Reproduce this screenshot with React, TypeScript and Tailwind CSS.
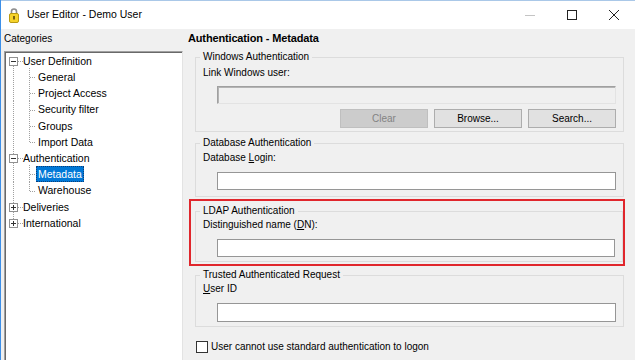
import React from 'react';

type Node = { label: string; open?: boolean; selected?: boolean; children?: string[] };

const tree: Node[] = [
  {
    label: 'User Definition',
    open: true,
    children: ['General', 'Project Access', 'Security filter', 'Groups', 'Import Data'],
  },
  { label: 'Authentication', open: true, children: ['Metadata', 'Warehouse'] },
  { label: 'Deliveries' },
  { label: 'International' },
];

const dot = { stroke: '#a0a0a0', strokeWidth: 1, strokeDasharray: '1 1' };

function RootRow({ node, first, last }: { node: Node; first: boolean; last: boolean }) {
  return (
    <div className="flex h-[16.2px] items-center">
      <svg width="18" height="16" className="shrink-0 overflow-visible">
        {!first && <line x1="8.5" y1="-1" x2="8.5" y2="4" style={dot} />}
        {!last && <line x1="8.5" y1="13" x2="8.5" y2="17" style={dot} />}
        <line x1="13" y1="8.5" x2="18" y2="8.5" style={dot} />
        <rect x="4.5" y="4.5" width="8" height="8" fill="#fff" stroke="#919191" />
        <line x1="6" y1="8.5" x2="11" y2="8.5" stroke="#333" />
        {!node.open && <line x1="8.5" y1="6" x2="8.5" y2="11" stroke="#333" />}
      </svg>
      <span className="text-[10.5px] leading-none">{node.label}</span>
    </div>
  );
}

function ChildRow({
  label,
  lastChild,
  rootContinues,
  selected,
}: {
  label: string;
  lastChild: boolean;
  rootContinues: boolean;
  selected: boolean;
}) {
  return (
    <div className="flex h-[16.2px] items-center">
      <svg width="31" height="16" className="shrink-0 overflow-visible">
        {rootContinues && <line x1="8.5" y1="-1" x2="8.5" y2="17" style={dot} />}
        <line x1="24.5" y1="-1" x2="24.5" y2={lastChild ? 8.5 : 17} style={dot} />
        <line x1="25" y1="8.5" x2="31" y2="8.5" style={dot} />
      </svg>
      <span
        className={
          selected
            ? 'flex h-[16px] items-center border border-dotted border-[#0b3f78] bg-[#0078d7] px-[1px] text-[10.5px] leading-none text-white'
            : 'px-[2px] text-[10.5px] leading-none'
        }
      >
        {label}
      </span>
    </div>
  );
}

function Group({
  title,
  className = '',
  children,
}: {
  title: string;
  className?: string;
  children: React.ReactNode;
}) {
  return (
    <fieldset className={`border border-[#dcdcdc] px-[7px] ${className}`}>
      <legend className="-ml-[3px] px-[3px] text-[10px] leading-[12px]">{title}</legend>
      {children}
    </fieldset>
  );
}

function TextBox({ className = '' }: { className?: string }) {
  return <div className={`ml-[14px] border border-[#969696] bg-white ${className}`} />;
}

function Btn({ label, disabled }: { label: string; disabled?: boolean }) {
  return (
    <div
      className={
        disabled
          ? 'flex h-full w-[88px] items-center justify-center border border-[#bfbfbf] bg-[#cccccc] text-[10px] text-[#838383]'
          : 'flex h-full w-[88px] items-center justify-center border border-[#adadad] bg-[#e1e1e1] text-[10px]'
      }
    >
      {label}
    </div>
  );
}

export default function App() {
  return (
    <div className="flex h-[360px] w-[635px] flex-col overflow-hidden border-l border-[#3c8fe8] bg-[#f0f0f0] font-['Liberation_Sans',Arial,sans-serif] text-black">
      {/* Title bar */}
      <div className="flex h-[29px] shrink-0 items-center border-t border-[#aac8e8] bg-white">
        <svg width="10" height="16" viewBox="0 0 10 16" className="ml-[8px] shrink-0">
          <path d="M2.5 7 V4.5 a2.5 2.5 0 0 1 5 0 V7" fill="none" stroke="#8c8c8c" strokeWidth="1.6" />
          <rect x="0.5" y="6.5" width="9" height="9" rx="1.5" fill="#f6d32b" stroke="#b99a12" />
          <rect x="4" y="9" width="2" height="3.5" fill="#7a6210" />
        </svg>
        <span className="ml-[8px] text-[10.5px]">User Editor - Demo User</span>
        <div className="ml-auto flex h-full">
          <div className="flex w-[42px] items-center justify-center">
            <svg width="10" height="10" viewBox="0 0 10 10">
              <line x1="0" y1="5.5" x2="10" y2="5.5" stroke="#c4c4c4" />
            </svg>
          </div>
          <div className="flex w-[42px] items-center justify-center">
            <svg width="10" height="10" viewBox="0 0 10 10">
              <rect x="0.5" y="0.5" width="9" height="9" fill="none" stroke="#222" />
            </svg>
          </div>
          <div className="flex w-[42px] items-center justify-center">
            <svg width="10" height="10" viewBox="0 0 10 10">
              <path d="M0 0 L10 10 M10 0 L0 10" stroke="#222" strokeWidth="1" />
            </svg>
          </div>
        </div>
      </div>

      {/* Body */}
      <div className="flex min-h-0 flex-1 pl-[3px]">
        {/* Categories */}
        <div className="flex w-[179px] shrink-0 flex-col pt-[4px]">
          <div className="text-[10px] leading-[12px]">Categories</div>
          <div className="mt-[6px] flex-1 border-t border-l border-r border-t-[#a0a0a0] border-l-[#a0a0a0] border-r-[#e3e3e3] bg-white pt-[1px] shadow-[inset_1px_1px_0_#696969]">
            {tree.map((node, i) => (
              <React.Fragment key={node.label}>
                <RootRow node={node} first={i === 0} last={i === tree.length - 1} />
                {node.open &&
                  node.children?.map((c, j) => (
                    <ChildRow
                      key={c}
                      label={c}
                      lastChild={j === node.children!.length - 1}
                      rootContinues={i < tree.length - 1}
                      selected={c === 'Metadata'}
                    />
                  ))}
              </React.Fragment>
            ))}
          </div>
        </div>

        {/* Detail panel */}
        <div className="ml-[5px] flex flex-1 flex-col pt-[3px]">
          <div className="text-[11px] font-bold leading-[13px] tracking-[-0.15px]">
            Authentication - Metadata
          </div>
          <div className="ml-[7px] mr-[11px] mt-[6px] flex flex-col">
            <Group title="Windows Authentication" className="pb-[3px]">
              <div className="mt-[4px] text-[10px] leading-[12px]">Link Windows user:</div>
              <div className="ml-[14px] mt-[7px] h-[18px] border border-t-[#a0a0a0] border-l-[#a0a0a0] border-r-[#e3e3e3] border-b-[#e3e3e3] bg-[#f0f0f0] shadow-[inset_1px_1px_0_#b4b4b4]" />
              <div className="mt-[5px] flex h-[19px] justify-end gap-[6px]">
                <Btn label="Clear" disabled />
                <Btn label="Browse..." />
                <Btn label="Search..." />
              </div>
            </Group>

            <Group title="Database Authentication" className="mt-[5px] pb-[6px]">
              <div className="mt-[3px] text-[10px] leading-[12px]">
                Database <u>L</u>ogin:
              </div>
              <TextBox className="mt-[8px] h-[18px]" />
            </Group>

            <div className="-ml-[6px] -mr-[1px] mt-[2px] border-2 border-[#e0262c] pb-[2px] pl-[4px]">
              <Group title="LDAP Authentication" className="mt-[4px] pb-[4px]">
                <div className="mt-[2px] text-[10px] leading-[12px]">
                  Distinguished name (<u>D</u>N):
                </div>
                <TextBox className="mt-[8px] h-[18px]" />
              </Group>
            </div>

            <Group title="Trusted Authenticated Request" className="mt-[3px] pb-[4px]">
              <div className="mt-[2px] text-[10px] leading-[12px]">
                <u>U</u>ser ID
              </div>
              <TextBox className="mt-[8px] h-[19px]" />
            </Group>

            <div className="ml-[1px] mt-[14px] flex items-center gap-[3px]">
              <div className="h-[12px] w-[12px] border border-[#333] bg-white" />
              <span className="text-[10px] leading-[12px]">
                User cannot use standard authentication to logon
              </span>
            </div>
          </div>
        </div>
      </div>
    </div>
  );
}
